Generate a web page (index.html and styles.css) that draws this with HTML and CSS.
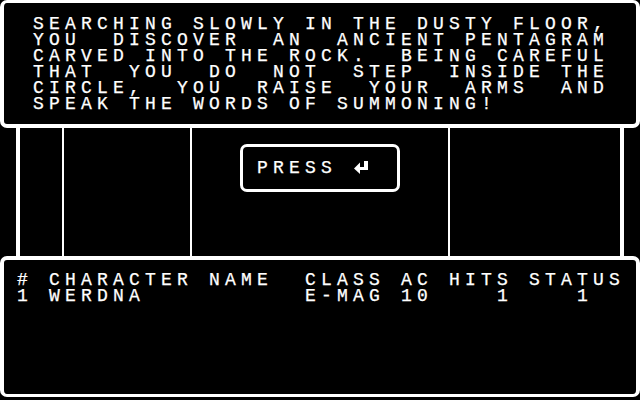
FILE: index.html
```html
<!DOCTYPE html>
<html>
<head>
<meta charset="utf-8">
<link rel="stylesheet" href="styles.css">
</head>
<body>
<div class="screen">
  <div class="panel top">
<pre class="txt">SEARCHING SLOWLY IN THE DUSTY FLOOR,
YOU  DISCOVER  AN  ANCIENT PENTAGRAM
CARVED INTO THE ROCK.  BEING CAREFUL
THAT  YOU  DO  NOT  STEP  INSIDE THE
CIRCLE,  YOU  RAISE  YOUR  ARMS  AND
SPEAK THE WORDS OF SUMMONING!</pre>
  </div>
  <div class="view">
    <div class="seg s1"></div>
    <div class="seg s2"></div>
    <div class="seg s3"></div>
    <div class="seg s4">
      <div class="btn">
        <span class="txt">PRESS</span>
        <svg class="ret" width="16" height="16" viewBox="0 0 16 16"><rect x="11" y="1" width="4" height="9" fill="#fff"/><rect x="6" y="7" width="9" height="3" fill="#fff"/><polygon points="1,8.5 7,2.5 7,14" fill="#fff"/></svg>
      </div>
    </div>
    <div class="seg s5"></div>
    <div class="seg s6"></div>
  </div>
  <div class="panel bottom">
<pre class="txt"># CHARACTER NAME  CLASS AC HITS STATUS
1 WERDNA          E-MAG 10    1    1</pre>
  </div>
</div>
</body>
</html>
```
FILE: styles.css
```css
html, body {
  margin: 0;
  padding: 0;
  background: #000;
}
.screen {
  width: 640px;
  height: 400px;
  display: flex;
  flex-direction: column;
  background: #000;
  overflow: hidden;
}
.txt {
  margin: 0;
  font-family: "Liberation Mono", monospace;
  font-size: 18px;
  line-height: 16px;
  letter-spacing: calc(16px - 1ch);
  color: #fff;
  white-space: pre;
  padding-left: 1px;
  -webkit-text-stroke: 0.25px #fff;
}
.panel {
  box-sizing: border-box;
  border-style: solid;
  border-color: #fff;
  border-radius: 7px;
}
.top {
  height: 128px;
  border-width: 3px 4px 4px 4px;
  padding: 13px 0 0 28px;
}
.view {
  height: 128px;
  display: flex;
}
.seg {
  box-sizing: border-box;
  height: 100%;
  border-right: 2px solid #fff;
}
.s1 { width: 20px; border-right-width: 4px; }
.s2 { width: 44px; }
.s3 { width: 128px; }
.s4 {
  width: 258px;
  display: flex;
  justify-content: center;
  align-items: flex-start;
}
.s5 { width: 174px; border-right-width: 4px; }
.s6 { width: 16px; border-right: none; }
.btn {
  box-sizing: border-box;
  margin-top: 16px;
  width: 160px;
  height: 48px;
  border: 3px solid #fff;
  border-radius: 7px;
  padding: 13px 0 0 13px;
  display: flex;
  align-items: flex-start;
}
.ret {
  margin-left: 16px;
  display: block;
}
.bottom {
  height: 141px;
  border-width: 4px 4px 3px 4px;
  padding: 12px 0 0 12px;
}
```
